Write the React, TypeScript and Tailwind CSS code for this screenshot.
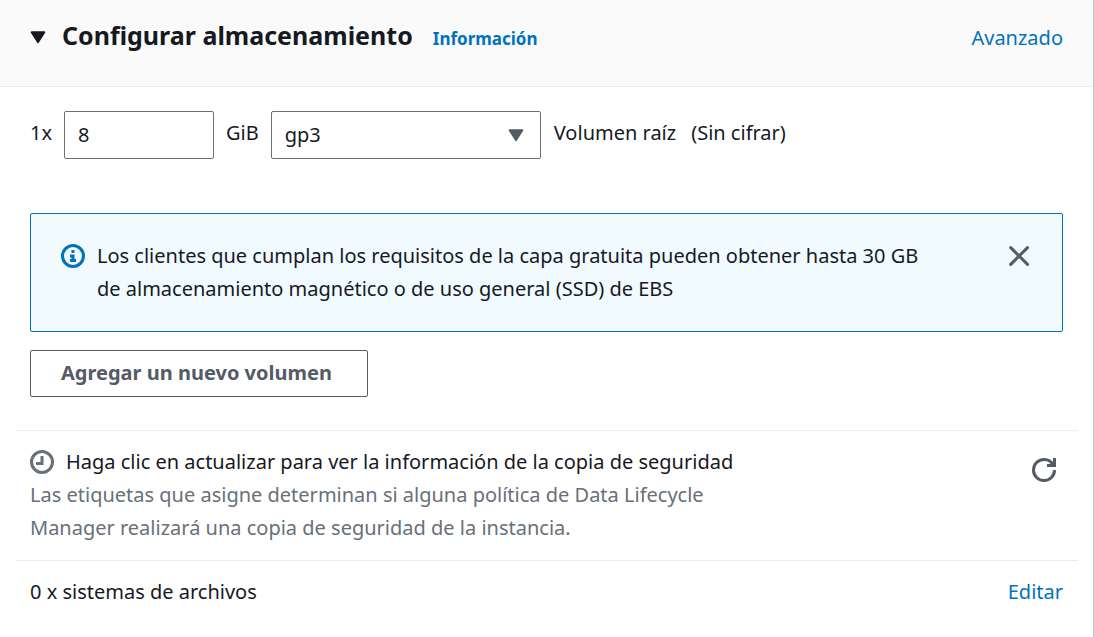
import { useState, type ReactNode } from "react";

function Icon({ children, className }: { children: ReactNode; className?: string }) {
  return (
    <svg
      viewBox="0 0 16 16"
      width="24"
      height="24"
      fill="none"
      stroke="currentColor"
      strokeWidth="2"
      aria-hidden="true"
      className={className}
    >
      {children}
    </svg>
  );
}

function Caret({ className }: { className?: string }) {
  return (
    <svg viewBox="0 0 16 13" width="16" height="13" aria-hidden="true" className={className}>
      <path
        d="M1.6 1.2h12.8L8 11.2z"
        fill="currentColor"
        stroke="currentColor"
        strokeWidth="1.8"
        strokeLinejoin="round"
      />
    </svg>
  );
}

export default function App() {
  const [size, setSize] = useState("8");
  const [volumeType, setVolumeType] = useState("gp3");

  return (
    <main className="min-h-screen border-r border-[#bfc4c4] bg-white font-['Noto_Sans',sans-serif] text-[20px] leading-[33px] text-[#16191f]">
      <header className="flex items-start justify-between border-b border-[#eaeded] bg-[#fafafa] px-[30px] pt-[17px] pb-[31px]">
        <div className="flex items-baseline">
          <button type="button" aria-label="Contraer" className="mr-4 pb-px">
            <Caret />
          </button>
          <h2 className="text-[25px] leading-9 font-bold">Configurar almacenamiento</h2>
          <a href="#info" className="ml-5 text-[17px] font-bold text-[#0073bb]">
            Información
          </a>
        </div>
        <a href="#avanzado" className="mt-1 text-[#0073bb]">
          Avanzado
        </a>
      </header>

      <section className="px-[30px] pt-6">
        <div className="flex items-center">
          <label htmlFor="size" className="mr-3 pb-1.5">
            1x
          </label>
          <input
            id="size"
            value={size}
            onChange={(e) => setSize(e.target.value)}
            className="h-12 w-[150px] rounded-xs border border-[#687078] bg-white px-[13px] pb-0.5"
          />
          <label htmlFor="type" className="mx-3 pb-1.5">
            GiB
          </label>
          <div className="relative">
            <select
              id="type"
              value={volumeType}
              onChange={(e) => setVolumeType(e.target.value)}
              className="h-12 w-[270px] appearance-none rounded-xs border border-[#687078] bg-white px-[13px] pb-0.5"
            >
              <option>gp3</option>
            </select>
            <Caret className="pointer-events-none absolute top-[18px] right-[17px] text-[#545b64]" />
          </div>
          <span className="ml-[13px] pb-1.5">Volumen raíz</span>
          <span className="ml-[15px] pb-1.5">(Sin cifrar)</span>
        </div>

        <div className="mt-[54px] flex items-start rounded-xs border border-[#0073bb] bg-[#f1faff] px-[30px] pt-[25px] pb-[26px]">
          <Icon className="mt-[5px] mr-3 shrink-0 text-[#0073bb]">
            <circle cx="8" cy="8" r="7" />
            <path d="M8 11V8H6M10 11H6M8 6V4" />
          </Icon>
          <p className="max-w-[850px] flex-1">
            Los clientes que cumplan los requisitos de la capa gratuita pueden obtener hasta 30 GB
            de almacenamiento magnético o de uso general (SSD) de EBS
          </p>
          <button type="button" aria-label="Cerrar" className="mt-[5px] ml-auto text-[#545b64]">
            <Icon>
              <path d="m1.8 2.4 11.2 11.2M13 2.4 1.8 13.6" strokeLinecap="round" />
            </Icon>
          </button>
        </div>

        <button
          type="button"
          className="mt-[18px] flex h-[47px] min-w-[338px] items-center rounded-xs border border-[#545b64] bg-white px-[30px] pb-0.5 font-bold text-[#545b64]"
        >
          Agregar un nuevo volumen
        </button>
      </section>

      <section className="mx-[15px] mt-[33px] flex items-start justify-between border-t border-[#eaeded] px-[15px] pt-[14px] pb-4">
        <div className="max-w-[720px]">
          <p className="flex items-center gap-3">
            <Icon className="text-[#687078]">
              <circle cx="8" cy="8" r="7" />
              <path d="M8 4v5H4" />
            </Icon>
            Haga clic en actualizar para ver la información de la copia de seguridad
          </p>
          <p className="text-[#687078]">
            Las etiquetas que asigne determinan si alguna política de Data Lifecycle
            <br />
            Manager realizará una copia de seguridad de la instancia.
          </p>
        </div>
        <button type="button" aria-label="Actualizar" className="mt-[13px] mr-[7px] text-[#545b64]">
          <Icon>
            <path d="M10 5h5V0" />
            <path d="M15 8a6.957 6.957 0 0 1-7 7 6.957 6.957 0 0 1-7-7 6.957 6.957 0 0 1 7-7 6.87 6.87 0 0 1 6.3 4" />
          </Icon>
        </button>
      </section>

      <section className="mx-[15px] flex items-center justify-between border-t border-[#eaeded] px-[15px] pt-[14px] pb-4">
        <p>0 x sistemas de archivos</p>
        <a href="#editar" className="text-[#0073bb]">
          Editar
        </a>
      </section>
    </main>
  );
}
